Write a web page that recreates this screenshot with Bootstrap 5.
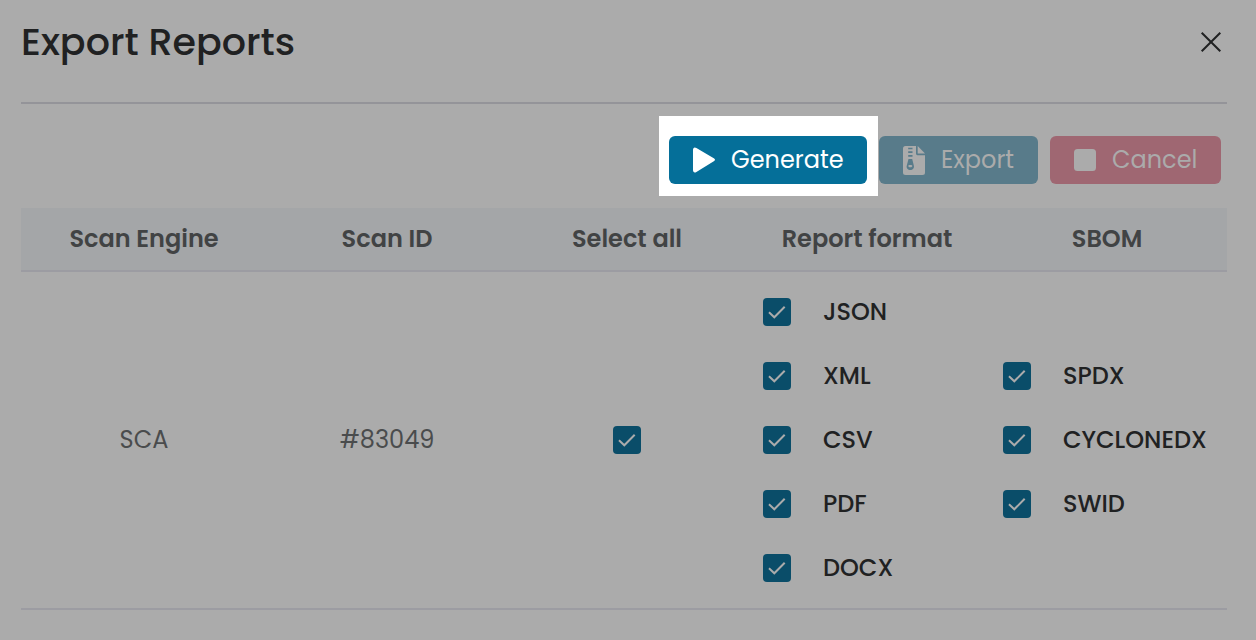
<!DOCTYPE html>
<html lang="en">
<head>
<meta charset="utf-8">
<meta name="viewport" content="width=device-width, initial-scale=1">
<title>Export Reports</title>
<link href="https://cdn.jsdelivr.net/npm/bootstrap@5.3.0/dist/css/bootstrap.min.css" rel="stylesheet">
<style>
body{background:#ababab;color:#202122;font-family:Poppins,Inter,"Open Sans",sans-serif;font-size:24px;line-height:36px;height:640px;overflow:hidden}
.dialog-head{height:104px;margin:0 29px 0 21px;border-bottom:2px solid #949499}
.dialog-title{font-size:38px;line-height:54px;font-weight:500;padding-top:15px}
.dialog-close{width:24px;height:24px;margin:30px 4px 0 0}
.tools{height:104px;padding:12px 35px 12px 0}
.spot{background:#fff;padding:20px 11px 12px 10px;height:80px;margin-right:1px}
.act{height:48px;border:0;border-radius:6px;padding:0 24px;font-size:24px;line-height:48px;gap:16px;color:#ababab}
.act:disabled{opacity:1;color:#ababab}
.act svg{flex:none}
.act-go{background:#056f99!important;color:#fff!important;width:198px}
.act-export{background:#587b8a!important;width:159px;margin:20px 12px 0 0}
.act-cancel{background:#9f6772!important;width:171px;margin-top:20px}
.grid-row{display:grid;grid-template-columns:246px repeat(4,240px);margin:0 29px 0 21px}
.grid-head{height:64px;background:#a4a6a8;border-bottom:2px solid #9c9ca2;color:#414344;font-weight:600;line-height:62px}
.grid-body{height:338px;border-bottom:2px solid #9c9ca2;color:#4a4c4d}
.opt{height:64px;padding-left:16px;gap:32px;color:#202122;font-weight:500}
.tick{width:28px;height:28px;border-radius:4px;background:#0a4d69;flex:none}
</style>
</head>
<body>
<svg class="d-none"><symbol id="check" viewBox="0 0 28 28"><path d="M6 14.300 11.300 19.300 21.700 8.700" fill="none" stroke="#ababab" stroke-width="2"/></symbol></svg>
<header class="dialog-head d-flex justify-content-between align-items-start">
  <h1 class="dialog-title m-0">Export Reports</h1>
  <svg class="dialog-close" viewBox="0 0 24 24" fill="none" stroke="#202122" stroke-width="2"><path d="M2.700 2.700 21.300 21.300M21.300 2.700 2.700 21.300"/></svg>
</header>
<div class="tools d-flex justify-content-end">
  <div class="spot">
    <button class="btn act act-go d-flex align-items-center"><svg width="22" height="26" viewBox="0 0 22 26"><path fill="currentColor" d="M0 3C0 .5 1.500-.2 3.400.900L20.800 11.200c1.600.9 1.600 2.200 0 3.100L3.400 24.900C1.500 26 0 25.300 0 23Z"/></svg>Generate</button>
  </div>
  <button class="btn act act-export d-flex align-items-center" disabled><svg width="22" height="29" viewBox="0 0 22 29"><path fill="currentColor" d="M2.500 0H13v7.500Q13 9.300 14.500 9.300H22v17.200Q22 29 19.500 29h-17Q0 29 0 26.500v-24Q0 0 2.500 0Z"/><path fill="currentColor" d="M14.700 0 22 7.400h-7.300Z"/><path stroke="#587b8a" stroke-width="1.700" d="M5.200 2.500h4.300M5.200 6.200h4.300M5.200 9.800h4.300"/><path fill="#587b8a" d="M5.500 13h3.700l1.600 6.400C11.600 22 9.700 24 7.300 24S3 22 3.800 19.400Z"/><rect x="5.300" y="19" width="4" height="2.200" rx="1.100" fill="currentColor"/></svg>Export</button>
  <button class="btn act act-cancel d-flex align-items-center" disabled><svg width="22" height="22" viewBox="0 0 22 22"><rect width="22" height="22" rx="3.500" fill="currentColor"/></svg>Cancel</button>
</div>
<div class="grid-row grid-head text-center"><div>Scan Engine</div><div>Scan ID</div><div>Select all</div><div>Report format</div><div>SBOM</div></div>
<div class="grid-row grid-body align-items-center text-center">
  <div>SCA</div>
  <div>#83049</div>
  <div class="d-flex justify-content-center"><svg class="tick"><use href="#check"/></svg></div>
  <div>
    <div class="opt d-flex align-items-center"><svg class="tick"><use href="#check"/></svg>JSON</div>
    <div class="opt d-flex align-items-center"><svg class="tick"><use href="#check"/></svg>XML</div>
    <div class="opt d-flex align-items-center"><svg class="tick"><use href="#check"/></svg>CSV</div>
    <div class="opt d-flex align-items-center"><svg class="tick"><use href="#check"/></svg>PDF</div>
    <div class="opt d-flex align-items-center"><svg class="tick"><use href="#check"/></svg>DOCX</div>
  </div>
  <div>
    <div class="opt d-flex align-items-center"><svg class="tick"><use href="#check"/></svg>SPDX</div>
    <div class="opt d-flex align-items-center"><svg class="tick"><use href="#check"/></svg>CYCLONEDX</div>
    <div class="opt d-flex align-items-center"><svg class="tick"><use href="#check"/></svg>SWID</div>
  </div>
</div>
<script src="https://cdn.jsdelivr.net/npm/bootstrap@5.3.0/dist/js/bootstrap.bundle.min.js"></script>
</body>
</html>
